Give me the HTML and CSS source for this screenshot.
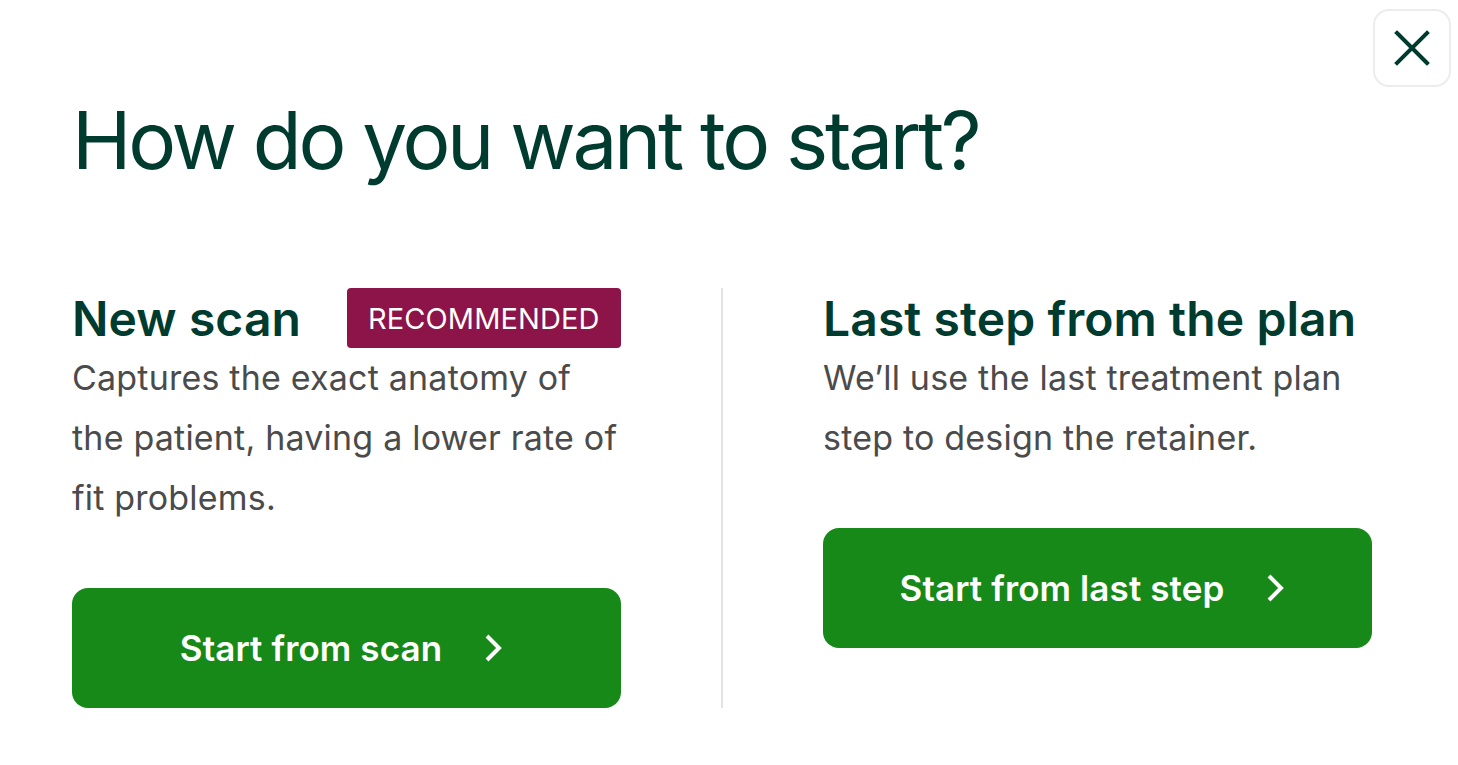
FILE: index.html
```html
<!DOCTYPE html>
<html lang="en">
<head>
<meta charset="utf-8">
<title>How do you want to start?</title>
<link rel="stylesheet" href="styles.css">
</head>
<body>
<div class="modal">
  <button class="close" aria-label="Close">
    <svg width="36" height="36" viewBox="0 0 36 36"><path d="M3 3 L33 33 M33 3 L3 33" stroke="#003b2f" stroke-width="4" fill="none" stroke-linecap="square"/></svg>
  </button>
  <h1 class="title">How do you want to start?</h1>
  <div class="options">
    <div class="option">
      <div class="option-head">
        <h2 class="option-title">New scan</h2>
        <span class="badge">RECOMMENDED</span>
      </div>
      <p class="option-text">Captures the exact anatomy of the patient, having a lower rate of fit problems.</p>
      <button class="cta"><span>Start from scan</span>
        <svg class="chev" width="29" height="30" viewBox="0 0 29 30"><path d="M3 3 L15 15 L3 27" stroke="#fff" stroke-width="4" fill="none"/></svg>
      </button>
    </div>
    <div class="divider"></div>
    <div class="option">
      <div class="option-head">
        <h2 class="option-title">Last step from the plan</h2>
      </div>
      <p class="option-text">We’ll use the last treatment plan step to design the retainer.</p>
      <button class="cta"><span>Start from last step</span>
        <svg class="chev" width="29" height="30" viewBox="0 0 29 30"><path d="M3 3 L15 15 L3 27" stroke="#fff" stroke-width="4" fill="none"/></svg>
      </button>
    </div>
  </div>
</div>
</body>
</html>
```
FILE: styles.css
```css
* { box-sizing: border-box; }
html, body { margin: 0; padding: 0; background: #fff; }
body { font-family: Inter, "Noto Sans", sans-serif; }
.modal {
  position: relative;
  width: 1458px;
  height: 765px;
  padding: 90px 0 0 72px;
}
.close {
  position: absolute;
  top: 9px;
  right: 7px;
  width: 78px;
  height: 78px;
  border: 2px solid #ececec;
  border-radius: 16px;
  background: #fff;
  display: flex;
  align-items: center;
  justify-content: center;
  padding: 0;
}
.title {
  margin: 0;
  font-weight: 400;
  font-size: 80px;
  line-height: 100px;
  letter-spacing: -3.3px;
  color: #003b2f;
}
.options {
  display: flex;
  margin-top: 98px;
}
.option {
  width: 549px;
  flex-shrink: 0;
  display: flex;
  flex-direction: column;
  align-items: flex-start;
}
.divider {
  width: 2px;
  flex-shrink: 0;
  background: #e3e3e3;
  margin: 0 100px;
}
.option-head {
  height: 60px;
  display: flex;
  align-items: center;
  gap: 46px;
}
.option-title {
  margin: 0;
  flex-shrink: 0;
  white-space: nowrap;
  font-size: 48px;
  font-weight: 600;
  color: #003b2f;
  letter-spacing: 0.1px;
}
.badge {
  flex-shrink: 0;
  white-space: nowrap;
  height: 60px;
  padding: 0 21px;
  display: flex;
  align-items: center;
  background: #8c1449;
  color: #fff;
  font-size: 29px;
  letter-spacing: 0.1px;
  border-radius: 4px;
}
.option-text {
  margin: 0;
  font-size: 34px;
  line-height: 60px;
  letter-spacing: 0.2px;
  color: #4b4b4b;
}
.cta {
  margin-top: 60px;
  width: 549px;
  height: 120px;
  border: none;
  border-radius: 16px;
  background: #168918;
  color: #fff;
  font-family: Inter, sans-serif;
  font-weight: 600;
  font-size: 35px;
  letter-spacing: 0.1px;
  display: flex;
  align-items: center;
  justify-content: center;
  gap: 42px;
}
.chev { flex-shrink: 0; }
```
